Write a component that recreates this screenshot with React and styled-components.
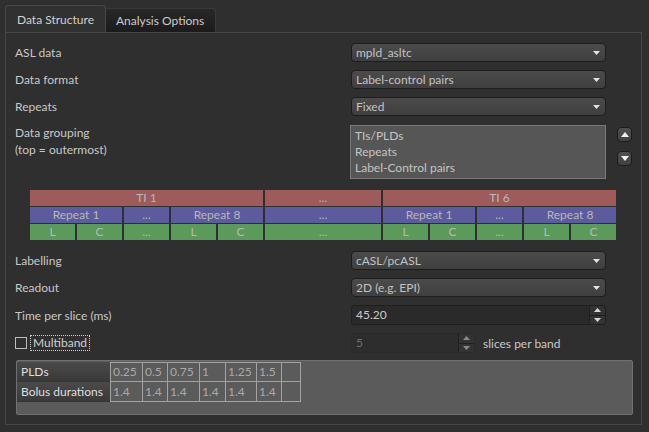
import React from "react";
import styled, { createGlobalStyle } from "styled-components";

const GlobalStyle = createGlobalStyle`
  html, body { margin: 0; padding: 0; background: #2f2f2f; }
  body {
    font-family: Lato, "Open Sans", sans-serif;
    font-size: 12px;
    color: #c8c8c8;
  }
  * { box-sizing: border-box; }
`;

const Window = styled.div`
  width: 649px;
  height: 432px;
  padding: 5px 0 0 5px;
  background: #2f2f2f;
  overflow: hidden;
`;

const TabBar = styled.div`
  display: flex;
  align-items: flex-end;
  height: 27px;
`;

const Tab = styled.div`
  display: flex;
  align-items: center;
  height: ${(p) => (p.$active ? "27px" : "24px")};
  width: ${(p) => (p.$active ? "101px" : "110px")};
  padding-left: ${(p) => (p.$active ? "11px" : "10px")};
  border: 1px solid ${(p) => (p.$active ? "#474747" : "#3a3a3a")};
  border-bottom: none;
  border-left: ${(p) => (p.$active ? "1px solid #474747" : "none")};
  border-radius: ${(p) => (p.$active ? "3px 3px 0 0" : "0 3px 0 0")};
  background: ${(p) =>
    p.$active ? "#313131" : "linear-gradient(#282828, #1b1b1b)"};
  color: ${(p) => (p.$active ? "#d0d0d0" : "#cacaca")};
  white-space: nowrap;
`;

const Panel = styled.div`
  width: 637px;
  height: 393px;
  border: 1px solid #464646;
  padding: 10px 8px 9px 9px;
  display: flex;
  flex-direction: column;
`;

const Row = styled.div`
  display: grid;
  grid-template-columns: 336px 255px auto;
  align-items: ${(p) => (p.$top ? "start" : "center")};
  margin-top: ${(p) => p.$mt || 0}px;
`;

const Label = styled.div`
  color: #c8c8c8;
  line-height: 17px;
  margin-top: ${(p) => p.$shift || 0}px;
`;

const Combo = styled.div`
  height: 19px;
  display: flex;
  align-items: center;
  justify-content: space-between;
  padding: 0 5px 0 4px;
  border: 1px solid #1d1d1d;
  border-radius: 4px;
  background: linear-gradient(#4b4b4b, #3f3f3f);
  color: #c2c2c2;
  line-height: 1;
`;

const DownArrow = () => (
  <svg width="7" height="4" viewBox="0 0 7 4">
    <polygon points="0,0 7,0 3.5,4" fill="#e2e2e2" />
  </svg>
);

const ListBox = styled.div`
  height: 54px;
  margin-left: -1px;
  border: 1px solid #7a7a7a;
  background: #565656;
  padding: 2px 4px;
  display: flex;
  flex-direction: column;
`;

const ListItem = styled.div`
  height: 16px;
  line-height: 16px;
  color: #c4c4c4;
`;

const MoveButtons = styled.div`
  display: flex;
  flex-direction: column;
  gap: 9px;
  padding: 2px 0 0 11px;
`;

const MoveButton = styled.div`
  width: 15px;
  height: 15px;
  border-radius: 4px;
  border: 1px solid #1c1c1c;
  background: linear-gradient(#505050, #404040);
  display: flex;
  align-items: center;
  justify-content: center;
`;

const Diagram = styled.div`
  margin: 11px 0 0 15px;
  width: 586px;
  display: grid;
  grid-template-columns: repeat(5, 45fr) 116fr repeat(5, 45fr);
  grid-auto-rows: 16px;
  column-gap: 2px;
  row-gap: 1px;
`;

const Block = styled.div`
  grid-column: span ${(p) => p.$span || 1};
  background: ${(p) => p.$color};
  color: #b8b8b8;
  display: flex;
  align-items: center;
  justify-content: center;
  line-height: 1;
`;

const RED = "#9d5b5b";
const BLUE = "#5b5b9d";
const GREEN = "#5b9a5b";

const SpinBox = styled.div`
  width: ${(p) => p.$w}px;
  height: 20px;
  display: flex;
  border: 1px solid ${(p) => (p.$disabled ? "#2a2a2a" : "#1f1f1f")};
  border-radius: 3px;
  background: ${(p) => (p.$disabled ? "#2d2d2d" : "#2a2a2a")};
  color: ${(p) => (p.$disabled ? "#6e6e6e" : "#cacaca")};
`;

const SpinText = styled.div`
  flex: 1;
  display: flex;
  align-items: center;
  padding-left: 4px;
  line-height: 1;
`;

const SpinButtons = styled.div`
  width: 16px;
  display: flex;
  flex-direction: column;
  border-left: 1px solid #1f1f1f;
  background: #333333;
  border-radius: 0 3px 3px 0;
`;

const SpinHalf = styled.div`
  flex: 1;
  display: flex;
  align-items: center;
  justify-content: center;
  border-top: ${(p) => (p.$lower ? "1px solid #1f1f1f" : "none")};
`;

const Tri = ({ up, color = "#d8d8d8", w = 7, h = 4 }) => (
  <svg width={w} height={h} viewBox={`0 0 ${w} ${h}`}>
    <polygon
      points={up ? `0,${h} ${w},${h} ${w / 2},0` : `0,0 ${w},0 ${w / 2},${h}`}
      fill={color}
    />
  </svg>
);

const CheckWrap = styled.div`
  display: flex;
  align-items: center;
  gap: 3px;
`;

const CheckBox = styled.div`
  width: 12px;
  height: 12px;
  border: 1px solid #bdbdbd;
  background: #2f2f2f;
`;

const FocusLabel = styled.div`
  border: 1px dotted #cfcfcf;
  padding: 0 2px;
  height: 16px;
  line-height: 14px;
  color: #cfcfcf;
`;

const SpinLine = styled.div`
  display: flex;
  align-items: center;
  gap: 8px;
`;

const TableFrame = styled.div`
  margin: 7px 0 0 1px;
  height: 55px;
  border: 1px solid #717171;
  border-radius: 2px;
  background: #5b5b5b;
  padding-top: 1px;
  display: flex;
  align-items: flex-start;
`;

const HeaderCol = styled.div`
  width: 93px;
  display: flex;
  flex-direction: column;
`;

const HeaderCell = styled.div`
  height: 20px;
  padding-left: 4px;
  display: flex;
  align-items: center;
  background: linear-gradient(#4a4a4a, #3a3a3a);
  border-bottom: 1px solid #353535;
  color: #dedede;
  line-height: 1;
`;

const DataGrid = styled.div`
  display: grid;
  grid-template-columns: 31px 24px 31px 25px 30px 24px 18px;
  grid-template-rows: 18px 19px;
  gap: 1px;
  padding: 1px;
  background: #a3a3a3;
`;

const DataCell = styled.div`
  background: #5b5b5b;
  color: #a9a9a9;
  padding-left: 2px;
  display: flex;
  align-items: center;
  line-height: 1;
  white-space: nowrap;
`;

const combos = [
  ["ASL data", "mpld_asltc"],
  ["Data format", "Label-control pairs"],
  ["Repeats", "Fixed"],
];

const plds = ["0.25", "0.5", "0.75", "1", "1.25", "1.5", ""];
const bolus = ["1.4", "1.4", "1.4", "1.4", "1.4", "1.4", ""];

export default function App() {
  return (
    <>
      <GlobalStyle />
      <Window>
        <TabBar>
          <Tab $active>Data Structure</Tab>
          <Tab>Analysis Options</Tab>
        </TabBar>
        <Panel>
          {combos.map(([label, value], i) => (
            <Row key={label} $mt={i === 0 ? 0 : 8}>
              <Label>{label}</Label>
              <Combo>
                {value}
                <DownArrow />
              </Combo>
            </Row>
          ))}

          <Row $mt={9} $top>
            <Label $shift={-1}>
              Data grouping
              <br />
              (top = outermost)
            </Label>
            <ListBox>
              <ListItem>TIs/PLDs</ListItem>
              <ListItem>Repeats</ListItem>
              <ListItem>Label-Control pairs</ListItem>
            </ListBox>
            <MoveButtons>
              <MoveButton>
                <Tri up color="#f0f0f0" w={8} h={5} />
              </MoveButton>
              <MoveButton>
                <Tri color="#f0f0f0" w={8} h={5} />
              </MoveButton>
            </MoveButtons>
          </Row>

          <Diagram>
            <Block $span={5} $color={RED}>TI 1</Block>
            <Block $color={RED}>...</Block>
            <Block $span={5} $color={RED}>TI 6</Block>

            <Block $span={2} $color={BLUE}>Repeat 1</Block>
            <Block $color={BLUE}>...</Block>
            <Block $span={2} $color={BLUE}>Repeat 8</Block>
            <Block $color={BLUE}>...</Block>
            <Block $span={2} $color={BLUE}>Repeat 1</Block>
            <Block $color={BLUE}>...</Block>
            <Block $span={2} $color={BLUE}>Repeat 8</Block>

            <Block $color={GREEN}>L</Block>
            <Block $color={GREEN}>C</Block>
            <Block $color={GREEN}>...</Block>
            <Block $color={GREEN}>L</Block>
            <Block $color={GREEN}>C</Block>
            <Block $color={GREEN}>...</Block>
            <Block $color={GREEN}>L</Block>
            <Block $color={GREEN}>C</Block>
            <Block $color={GREEN}>...</Block>
            <Block $color={GREEN}>L</Block>
            <Block $color={GREEN}>C</Block>
          </Diagram>

          <Row $mt={11}>
            <Label>Labelling</Label>
            <Combo>
              cASL/pcASL
              <DownArrow />
            </Combo>
          </Row>
          <Row $mt={8}>
            <Label>Readout</Label>
            <Combo>
              2D (e.g. EPI)
              <DownArrow />
            </Combo>
          </Row>
          <Row $mt={8}>
            <Label>Time per slice (ms)</Label>
            <SpinBox $w={255}>
              <SpinText>45.20</SpinText>
              <SpinButtons>
                <SpinHalf>
                  <Tri up />
                </SpinHalf>
                <SpinHalf $lower>
                  <Tri />
                </SpinHalf>
              </SpinButtons>
            </SpinBox>
          </Row>
          <Row $mt={8}>
            <CheckWrap>
              <CheckBox />
              <FocusLabel>Multiband</FocusLabel>
            </CheckWrap>
            <SpinLine>
              <SpinBox $w={124} $disabled>
                <SpinText>5</SpinText>
                <SpinButtons>
                  <SpinHalf>
                    <Tri up color="#8a8a8a" />
                  </SpinHalf>
                  <SpinHalf $lower>
                    <Tri color="#8a8a8a" />
                  </SpinHalf>
                </SpinButtons>
              </SpinBox>
              <Label>slices per band</Label>
            </SpinLine>
          </Row>

          <TableFrame>
            <HeaderCol>
              <HeaderCell>PLDs</HeaderCell>
              <HeaderCell>Bolus durations</HeaderCell>
            </HeaderCol>
            <DataGrid>
              {plds.map((v, i) => (
                <DataCell key={"p" + i}>{v}</DataCell>
              ))}
              {bolus.map((v, i) => (
                <DataCell key={"b" + i}>{v}</DataCell>
              ))}
            </DataGrid>
          </TableFrame>
        </Panel>
      </Window>
    </>
  );
}
